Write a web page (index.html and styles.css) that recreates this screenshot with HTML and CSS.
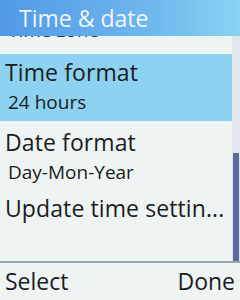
FILE: index.html
```html
<!DOCTYPE html>
<html>
<head>
<meta charset="utf-8">
<link rel="stylesheet" href="styles.css">
</head>
<body>
<div class="screen">
  <header class="header">Time &amp; date</header>
  <div class="body">
    <div class="list">
      <div class="item partial"><div class="sub">Time zone</div></div>
      <div class="item selected">
        <div class="title">Time format</div>
        <div class="sub">24 hours</div>
      </div>
      <div class="item">
        <div class="title">Date format</div>
        <div class="sub">Day-Mon-Year</div>
      </div>
      <div class="item">
        <div class="title">Update time settin...</div>
      </div>
    </div>
    <div class="scroll"><div class="thumb"></div></div>
  </div>
  <footer class="softkeys"><span>Select</span><span>Done</span></footer>
</div>
</body>
</html>
```
FILE: styles.css
```css
html, body { margin: 0; padding: 0; }
body { width: 240px; height: 300px; overflow: hidden; background: #eef4f3; font-family: "Open Sans", "DejaVu Sans", sans-serif; color: #1a1d22; }
.screen { width: 240px; height: 300px; display: flex; flex-direction: column; }
.header { height: 36px; box-sizing: border-box; padding-left: 19px; background: linear-gradient(90deg, #5199e6 0%, #6db6ee 60%, #88d2f2 100%); color: #eef5fb; font-size: 23px; line-height: 37px; }
.body { flex: 1; display: flex; overflow: hidden; }
.list { flex: 1; display: flex; flex-direction: column; }
.item { padding: 0 0 0 5px; }
.partial { height: 18px; overflow: hidden; }
.partial .sub { margin-top: -21px; color: #333a44; }
.selected { background: #8ed2f2; height: 67px; box-sizing: border-box; padding-top: 3px; }
.title { font-size: 23px; line-height: 30px; letter-spacing: 0.1px; }
.sub { font-size: 19px; line-height: 30px; padding-left: 3px; }
.item + .item:not(.selected) { padding-top: 6px; }
.scroll { width: 8px; position: relative; background: #e0e6ee; }
.thumb { position: absolute; left: 1px; right: 1px; top: 117px; bottom: 0; background: #5c6a9c; }
.softkeys { height: 37px; border-top: 2px solid #9aa3b0; display: flex; justify-content: space-between; padding: 0 5px; font-size: 23px; line-height: 36px; }
```
